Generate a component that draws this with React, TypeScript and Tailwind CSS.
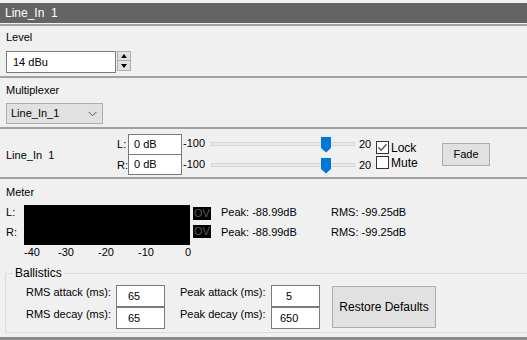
import React from 'react';

const FONT = "font-['Liberation_Sans',Arial,sans-serif]";

function Separator() {
  return <div className="h-[2px] bg-[#a0a0a0]" />;
}

function Slider({ pos }: { pos: number }) {
  return (
    <div className="relative w-[154px] h-[21px] shrink-0">
      <div className="absolute left-[6px] right-[4px] top-[8px] h-[4px] bg-[#e7eaea] border border-[#d6d6d6]" />
      <svg
        className="absolute top-[3px]"
        style={{ left: pos }}
        width="10"
        height="16"
        viewBox="0 0 10 16"
      >
        <path d="M0 0H10V11L5 15.5L0 11Z" fill="#0078d7" />
      </svg>
    </div>
  );
}

function Checkbox({ checked, label }: { checked?: boolean; label: string }) {
  return (
    <div className="flex items-center h-[15px]">
      <div className="w-[13px] h-[13px] border border-[#333] bg-white flex items-center justify-center">
        {checked && (
          <svg width="11" height="11" viewBox="0 0 11 11">
            <path d="M1.5 5.5L4.2 8.3L9.5 2.2" fill="none" stroke="#555" strokeWidth="1.4" />
          </svg>
        )}
      </div>
      <span className="ml-[2px] text-[12px] leading-[14px]">{label}</span>
    </div>
  );
}

function MeterRow({ ch, ovTop }: { ch: string; ovTop: string }) {
  return (
    <div className="flex items-start h-[20px]">
      <div className="w-[18px] text-[11px] leading-[14px]">{ch}:</div>
      <div className="w-[166px] h-[20px] bg-black" />
      <div className={`ml-[3px] ${ovTop} w-[18px] h-[13px] bg-black text-[#5a5a5a] text-[11px] leading-[13px] pl-[1px]`}>
        OV
      </div>
      <div className="ml-[10px] w-[110px] text-[11px] leading-[14px]">Peak: -88.99dB</div>
      <div className="text-[11px] leading-[14px]">RMS: -99.25dB</div>
    </div>
  );
}

function BallisticsRow({
  rmsLabel,
  rmsValue,
  rmsPad,
  peakLabel,
  peakValue,
  peakPad,
}: {
  rmsLabel: string;
  rmsValue: string;
  rmsPad: string;
  peakLabel: string;
  peakValue: string;
  peakPad: string;
}) {
  return (
    <div className="flex items-start h-[22px]">
      <div className="w-[110px] pl-[20px] text-[11px] leading-[14px] whitespace-nowrap">{rmsLabel}</div>
      <div className={`w-[49px] h-[22px] bg-white border border-[#7a7a7a] text-[11px] leading-[20px] ${rmsPad}`}>
        {rmsValue}
      </div>
      <div className="w-[106px] pl-[15px] text-[11px] leading-[14px] whitespace-nowrap">{peakLabel}</div>
      <div className={`w-[49px] h-[22px] bg-white border border-[#7a7a7a] text-[11px] leading-[20px] ${peakPad}`}>
        {peakValue}
      </div>
    </div>
  );
}

export default function App() {
  return (
    <div className={`w-[527px] h-[340px] bg-[#f0f0f0] overflow-hidden text-black ${FONT}`}>
      {/* Title */}
      <div className="pt-[3px]">
        <div className="h-[20px] bg-[#646464] text-white text-[12px] px-[5px] flex items-center whitespace-pre">
          Line_In  1
        </div>
      </div>
      <div className="h-px" />
      <Separator />

      {/* Level */}
      <div className="h-[50px] px-[6px] pt-[4px]">
        <div className="text-[11px] leading-[14px]">Level</div>
        <div className="mt-[7px] flex items-start">
          <div className="w-[110px] h-[22px] bg-white border border-[#7a7a7a] text-[11px] leading-[20px] pl-[6px]">
            14 dBu
          </div>
          <div className="ml-[1px] w-[14px] flex flex-col">
            <div className="h-[10px] border border-[#adadad] bg-[#e1e1e1] flex items-center justify-center">
              <svg width="6" height="4" viewBox="0 0 6 4">
                <path d="M3 0L6 4H0Z" fill="#000" />
              </svg>
            </div>
            <div className="h-[10px] border border-[#adadad] border-t-0 bg-[#e1e1e1] flex items-center justify-center">
              <svg width="6" height="4" viewBox="0 0 6 4">
                <path d="M0 0H6L3 4Z" fill="#000" />
              </svg>
            </div>
          </div>
        </div>
      </div>
      <Separator />

      {/* Multiplexer */}
      <div className="h-[49px] px-[6px] pt-[5px]">
        <div className="text-[11px] leading-[14px]">Multiplexer</div>
        <div className="mt-[6px] w-[97px] h-[21px] bg-[#e1e1e1] border border-[#adadad] flex items-center pl-[4px] pr-[5px]">
          <span className="text-[11px] flex-1">Line_In_1</span>
          <svg width="9" height="6" viewBox="0 0 9 6">
            <path d="M0.5 0.8L4.5 4.8L8.5 0.8" fill="none" stroke="#555" strokeWidth="1" />
          </svg>
        </div>
      </div>
      <Separator />

      {/* Channel */}
      <div className="h-[48px] px-[6px] flex items-start">
        <div className="w-[111px] pt-[19px] text-[11px] leading-[14px] whitespace-pre">Line_In  1</div>
        <div className="pt-[5px] flex flex-col">
          {['L', 'R'].map((ch, i) => (
            <div key={ch} className="flex items-start h-[21px]">
              <div className="w-[11px] text-[11px] leading-[21px]">{ch}:</div>
              <div
                className={`w-[54px] bg-white border border-[#7a7a7a] ${
                  i === 1 ? 'border-t-0 h-[20px]' : 'h-[21px]'
                } text-[11px] leading-[19px] pl-[5px]`}
              >
                0 dB
              </div>
              <div className="w-[23px] pl-[1px] text-[11px] leading-[19px]">-100</div>
              <Slider pos={116} />
              <div className="w-[17px] text-[11px] leading-[21px]">20</div>
            </div>
          ))}
        </div>
        <div className="w-[66px] pt-[11px] flex flex-col">
          <Checkbox checked label="Lock" />
          <Checkbox label="Mute" />
        </div>
        <div className="mt-[14px] w-[48px] h-[23px] bg-[#e1e1e1] border border-[#adadad] text-[11px] flex items-center justify-center">
          Fade
        </div>
      </div>
      <Separator />

      {/* Meter */}
      <div className="h-[158px] pt-[6px]">
        <div className="px-[6px] text-[11px] leading-[14px]">Meter</div>
        <div className="mt-[6px] px-[6px]">
          <MeterRow ch="L" ovTop="mt-[2px]" />
          <MeterRow ch="R" ovTop="mt-0" />
        </div>
        <div className="relative h-[14px] text-[11px] leading-[14px]">
          <span className="absolute left-[24px]">-40</span>
          <span className="absolute left-[58px]">-30</span>
          <span className="absolute left-[98px]">-20</span>
          <span className="absolute left-[138px]">-10</span>
          <span className="absolute left-[185px]">0</span>
        </div>

        {/* Ballistics */}
        <div className="relative mt-[14px] ml-[5px] w-[600px] h-[60px] border border-[#dcdcdc] pt-[11px]">
          <span className="absolute left-[7px] top-[-8px] px-[2px] bg-[#f0f0f0] text-[12px] leading-[14px]">
            Ballistics
          </span>
          <div className="flex items-start">
            <div className="flex flex-col">
              <BallisticsRow
                rmsLabel="RMS attack (ms):"
                rmsValue="65"
                rmsPad="pl-[11px]"
                peakLabel="Peak attack (ms):"
                peakValue="5"
                peakPad="pl-[14px]"
              />
              <BallisticsRow
                rmsLabel="RMS decay (ms):"
                rmsValue="65"
                rmsPad="pl-[11px]"
                peakLabel="Peak decay (ms):"
                peakValue="650"
                peakPad="pl-[8px]"
              />
            </div>
            <div className="ml-[12px] mt-[1px] w-[104px] h-[42px] bg-[#e1e1e1] border border-[#adadad] text-[12px] flex items-center justify-center">
              Restore Defaults
            </div>
          </div>
        </div>
      </div>
      <div className="h-[3px] bg-[#8a8a8a]" />
    </div>
  );
}
